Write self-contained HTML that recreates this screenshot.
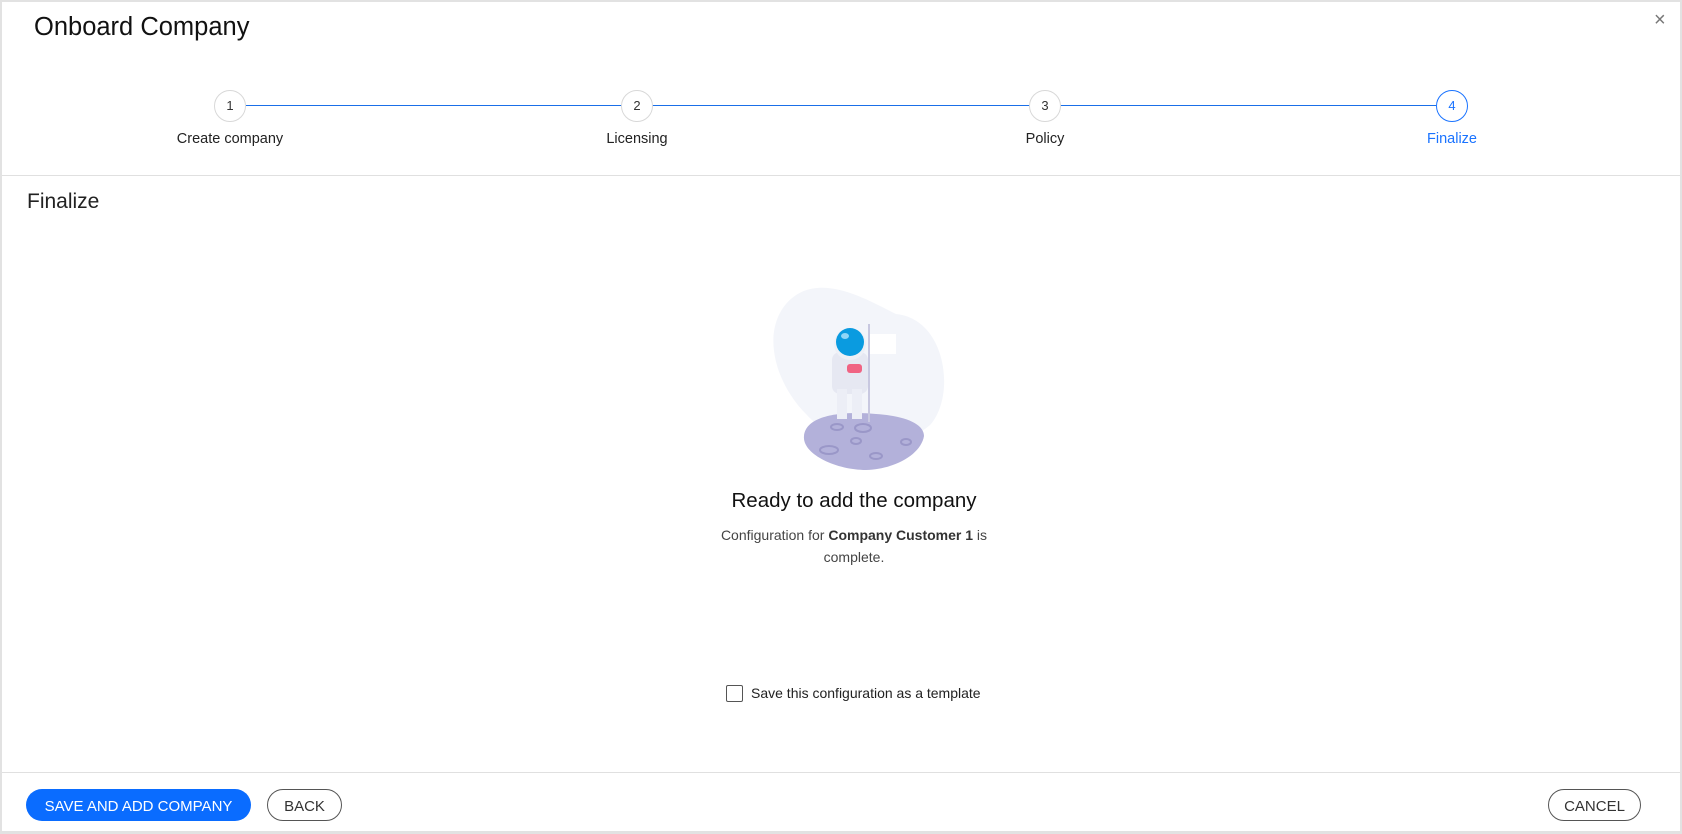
<!DOCTYPE html>
<html><head><meta charset="utf-8"><style>
*{box-sizing:border-box;margin:0;padding:0}
body{width:1682px;height:834px;background:#e2e2e2;font-family:"Liberation Sans",sans-serif;color:#1d1d1d;position:relative;overflow:hidden}
.m{position:absolute;left:2px;top:2px;width:1678px;height:829px;background:#fff}
.a{position:absolute}
.c{position:absolute;width:32px;height:32px;border-radius:50%;border:1px solid #d8d8d8;background:#fff;font-size:13px;text-align:center;line-height:30px;color:#333;top:90px}
.l{position:absolute;top:131px;font-size:14.5px;color:#222;width:200px;text-align:center}
.btn{position:absolute;top:789px;height:32px;border-radius:16px;font-size:15px;display:flex;align-items:center;justify-content:center;padding-top:2px}
</style></head><body>
<div class="m"></div>
<div class="a" style="left:34px;top:13px;font-size:25.5px;color:#111">Onboard Company</div>
<div class="a" style="left:1654px;top:9px;font-size:20px;color:#777">×</div>
<div class="a" style="left:246px;top:105px;width:1190px;height:1px;background:#1a6fe8"></div>
<div class="c" style="left:214px">1</div>
<div class="c" style="left:621px">2</div>
<div class="c" style="left:1029px">3</div>
<div class="c" style="left:1436px;border-color:#1a73ff;color:#1a73ff">4</div>
<div class="l" style="left:130px">Create company</div>
<div class="l" style="left:537px">Licensing</div>
<div class="l" style="left:945px">Policy</div>
<div class="l" style="left:1352px;color:#1a73ff">Finalize</div>
<div class="a" style="left:2px;top:175px;width:1678px;height:1px;background:#e0e0e0"></div>
<div class="a" style="left:27px;top:190px;font-size:21px;color:#222">Finalize</div>
<svg class="a" style="left:756px;top:274px" width="200" height="200" viewBox="0 0 200 200">
<path d="M30 30 C60 -5 110 25 140 40 C190 45 200 120 175 150 C150 175 80 175 50 140 C20 110 5 60 30 30Z" fill="#f3f5fa"/>
<path d="M48 162 C50 140 90 137 120 140 C150 142 168 150 168 162 C165 180 140 195 110 196 C80 196 46 180 48 162Z" fill="#b3b1da"/>
<g fill="none" stroke="#9a97c8" stroke-width="2"><ellipse cx="81" cy="153" rx="6" ry="3"/><ellipse cx="107" cy="154" rx="8" ry="4"/><ellipse cx="73" cy="176" rx="9" ry="4"/><ellipse cx="120" cy="182" rx="6" ry="3"/><ellipse cx="150" cy="168" rx="5" ry="3"/><ellipse cx="100" cy="167" rx="5" ry="3"/></g>
<rect x="112" y="50" width="2" height="98" fill="#c8c8e0"/><rect x="114" y="60" width="26" height="20" fill="#fff"/>
<rect x="76" y="78" width="36" height="42" rx="8" fill="#e6e8f2"/>
<rect x="81" y="115" width="10" height="30" fill="#eceef6"/><rect x="96" y="115" width="10" height="30" fill="#eceef6"/>
<rect x="91" y="90" width="15" height="9" rx="3" fill="#f06383"/>
<circle cx="94" cy="70" r="16" fill="#eef0f6"/><circle cx="94" cy="68" r="14" fill="#0a9be0"/><ellipse cx="89" cy="62" rx="4" ry="3" fill="#8fd6f7"/>
</svg>
<div class="a" style="left:654px;top:489px;width:400px;text-align:center;font-size:20.5px;color:#111">Ready to add the company</div>
<div class="a" style="left:704px;top:524px;width:300px;text-align:center;font-size:14px;line-height:22px;color:#444">Configuration for <b style="color:#333">Company Customer 1</b> is complete.</div>
<div class="a" style="left:726px;top:685px;width:17px;height:17px;border:1.5px solid #555;border-radius:2px"></div>
<div class="a" style="left:751px;top:685px;font-size:14px;color:#222">Save this configuration as a template</div>
<div class="a" style="left:2px;top:772px;width:1678px;height:1px;background:#e0e0e0"></div>
<div class="btn" style="left:26px;width:225px;background:#0a6cff;color:#fff">SAVE AND ADD COMPANY</div>
<div class="btn" style="left:267px;width:75px;border:1px solid #555;color:#333">BACK</div>
<div class="btn" style="left:1548px;width:93px;border:1px solid #555;color:#333">CANCEL</div>
</body></html>
